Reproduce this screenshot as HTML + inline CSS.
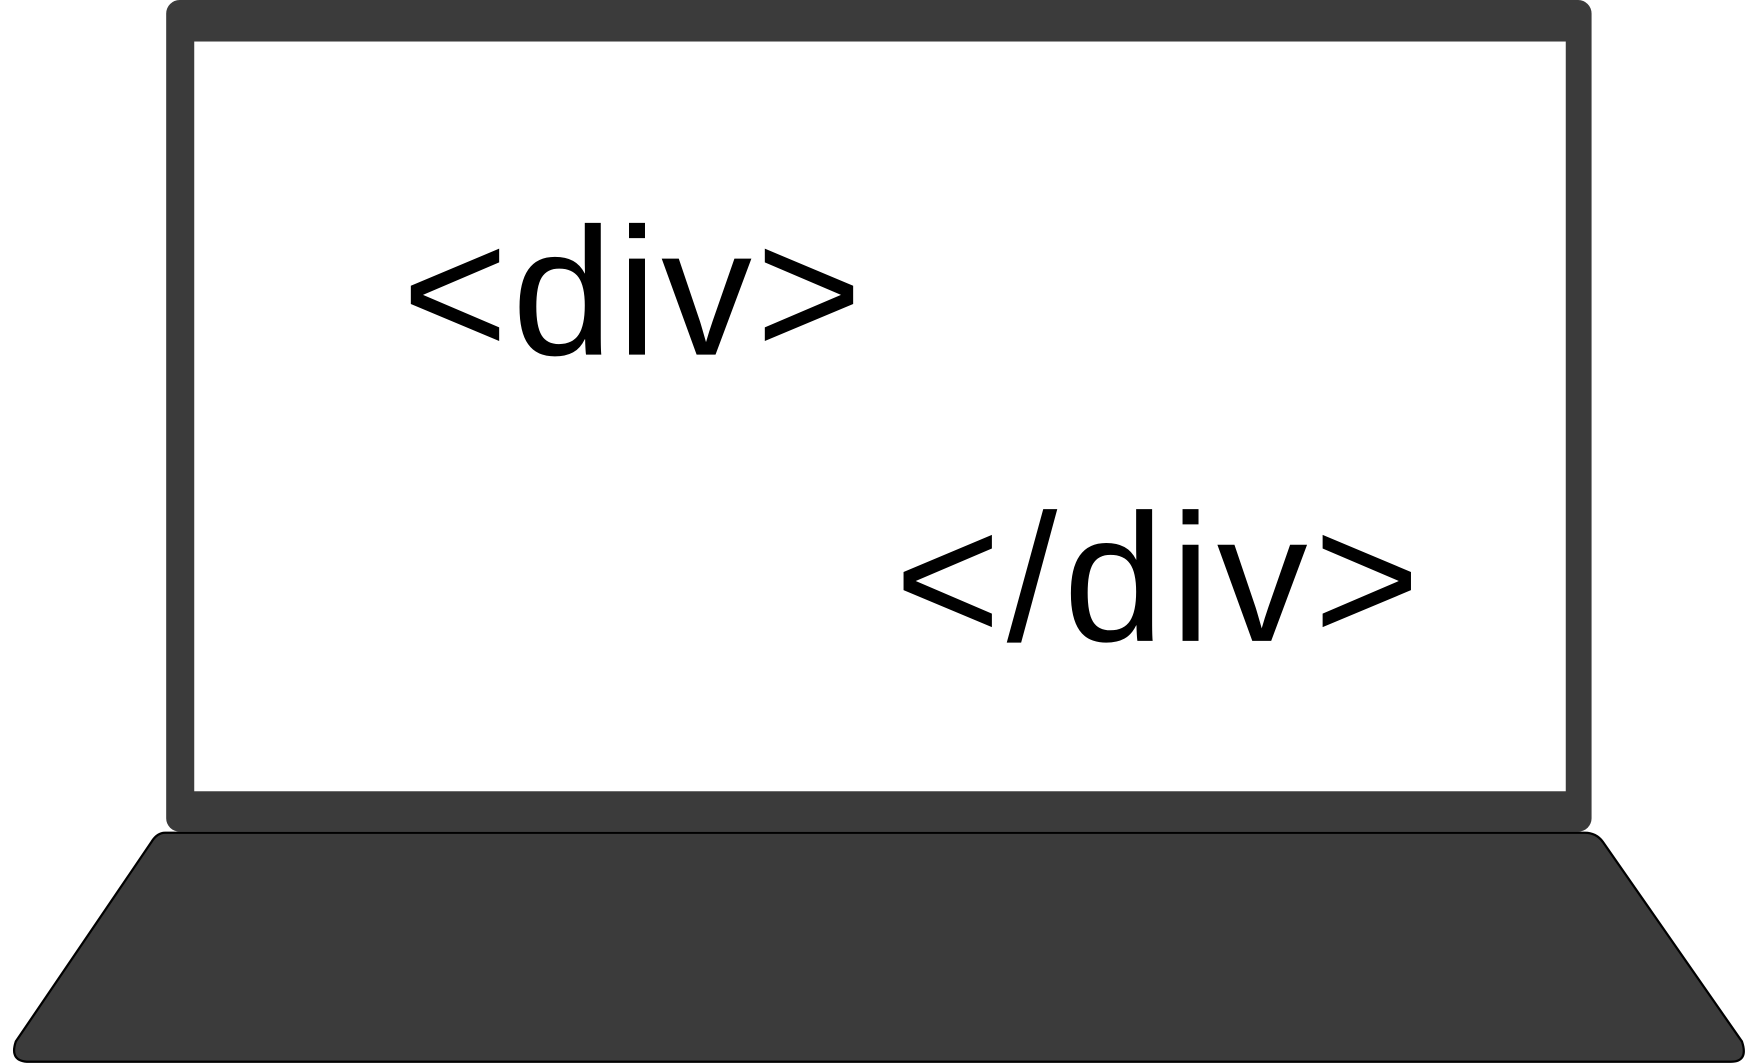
<!DOCTYPE html>
<html><head><style>html,body{margin:0;padding:0;background:#fff;width:1760px;height:1064px;overflow:hidden}svg{display:block}</style></head>
<body>
<svg width="1760" height="1064" viewBox="0 0 1568 948" xmlns="http://www.w3.org/2000/svg">
<rect x="148" y="0" width="1270" height="741" rx="12" fill="#3b3b3b"/>
<rect x="173" y="37" width="1222" height="668" fill="#fff"/>
<path d="M147 742 L1412 742 Q1422 742 1428 750 L1552 928 Q1558 946 1542 946 L26 946 Q8 946 14 928 L135 750 Q140 742 147 742 Z" fill="#3b3b3b" stroke="#000" stroke-width="2"/>
<text x="358" y="316" font-family="Liberation Sans, Arial, sans-serif" font-size="162" textLength="410" lengthAdjust="spacing" fill="#000">&lt;div&gt;</text>
<text x="797" y="571" font-family="Liberation Sans, Arial, sans-serif" font-size="162" textLength="468" lengthAdjust="spacing" fill="#000">&lt;/div&gt;</text>
</svg>
</body></html>
